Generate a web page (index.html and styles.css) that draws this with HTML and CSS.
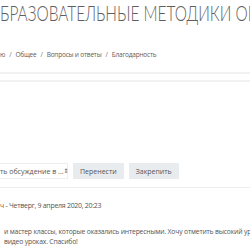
FILE: index.html
```html
<!DOCTYPE html>
<html>
<head>
    <link rel="stylesheet" href="styles.css">
</head>
<body>
    <div class="page">
        <h1 class="site-title"><span>БРАЗОВАТЕЛЬНЫЕ МЕТОДИКИ ОБУЧЕНИЯ</span></h1>
        <div class="breadcrumb">
            <a href="#">ю</a>
            <span class="sep">/</span>
            <a href="#">Общее</a>
            <span class="sep">/</span>
            <a href="#">Вопросы и ответы</a>
            <span class="sep">/</span>
            <a href="#">Благодарность</a>
        </div>
        <div class="nav-strip"></div>
        <div class="discussion-controls">
            <div class="move-select">
                <span>ть обсуждение в ...</span>
                <span class="arrows">&#8661;</span>
            </div>
            <button class="btn">Перенести</button>
            <button class="btn">Закрепить</button>
        </div>
        <div class="post">
            <div class="post-header"><a href="#">ч</a> - Четверг, 9 апреля 2020, 20:23</div>
            <div class="post-body">
                <p>и мастер классы, которые оказались интересными. Хочу отметить высокий уровень</p>
                <p>видео уроках. Спасибо!</p>
            </div>
        </div>
    </div>
</body>
</html>
```

FILE: styles.css
```css
body {
    margin: 0;
    background: #fff;
    font-family: "Open Sans", "DejaVu Sans", sans-serif;
    color: #555;
    overflow: hidden;
}
.page {
    width: 250px;
    overflow: hidden;
}
.site-title {
    margin: 0;
    padding-top: 2px;
    font-family: "Lato", sans-serif;
    font-weight: 300;
    font-size: 21px;
    line-height: 22px;
    color: #5f5f5f;
    white-space: nowrap;
}
.site-title span {
    display: inline-block;
    transform: scaleX(0.735);
    transform-origin: left center;
}
.breadcrumb {
    margin-top: 26px;
    display: flex;
    gap: 4px;
    font-size: 6.5px;
    letter-spacing: -0.2px;
    line-height: 10px;
    white-space: nowrap;
}
.breadcrumb a {
    color: #6a5a55;
    text-decoration: none;
}
.breadcrumb .sep {
    color: #777;
}
.nav-strip {
    margin-top: 12px;
    height: 6px;
    border-top: 2px solid #f1f1f1;
    border-bottom: 2px solid #f1f1f1;
}
.discussion-controls {
    margin-top: 81px;
    display: flex;
    gap: 5px;
    padding-bottom: 8px;
    border-bottom: 1px solid #eee;
}
.move-select {
    width: 68px;
    height: 16px;
    display: flex;
    align-items: center;
    justify-content: space-between;
    padding-right: 4px;
    box-sizing: border-box;
    border: 1px solid #eee;
    border-left: none;
    font-size: 7px;
    color: #555;
    white-space: nowrap;
}
.move-select .arrows {
    font-size: 6px;
}
.btn {
    height: 16px;
    padding: 0 7px;
    border: none;
    background: #e9ecef;
    font-family: inherit;
    font-size: 7px;
    color: #555;
}
.post {
    padding-top: 12px;
}
.post-header {
    font-size: 7px;
    letter-spacing: -0.28px;
    line-height: 12px;
    white-space: nowrap;
}
.post-header a {
    color: #b05a3a;
    text-decoration: none;
}
.post-body {
    margin-top: 15px;
    font-size: 6.8px;
    letter-spacing: -0.18px;
    line-height: 10px;
}
.post-body p {
    margin: 0;
    padding-left: 4px;
    white-space: nowrap;
}
```
